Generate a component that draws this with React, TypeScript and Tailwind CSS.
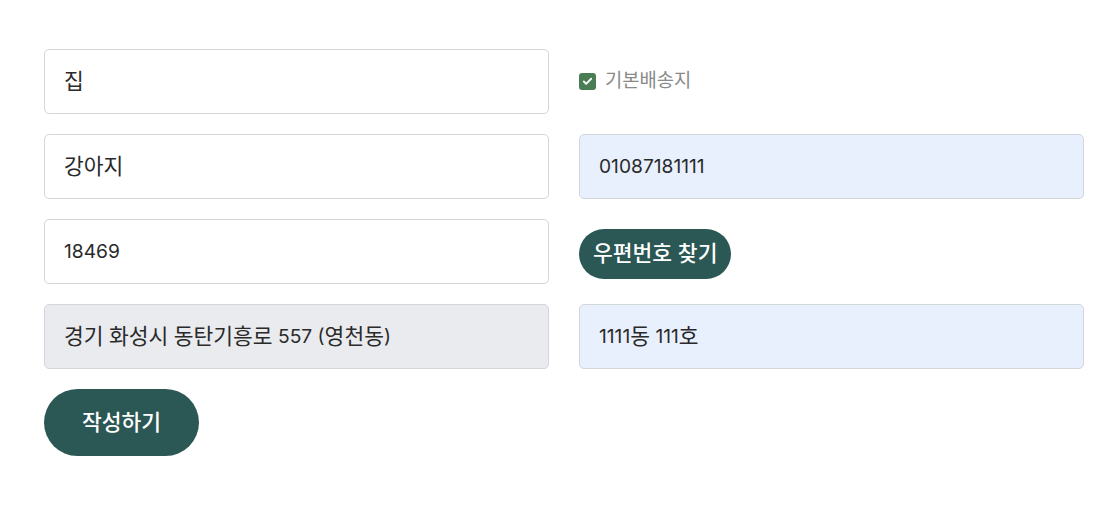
import { Check } from 'lucide-react'

const font = { fontFamily: 'Inter, "Noto Sans CJK KR", sans-serif' }

// hangul in the shot renders wider than latin, so size the runs separately
function Mixed({ text, big, small }: { text: string; big: string; small: string }) {
  const parts = text.split(/([\uAC00-\uD7A3]+)/).filter(Boolean)
  return (
    <>
      {parts.map((p, i) =>
        /[\uAC00-\uD7A3]/.test(p) ? (
          <span key={i} className={big}>{p}</span>
        ) : (
          <span key={i} className={small}>{p}</span>
        )
      )}
    </>
  )
}

function Field({ value, tone = 'white' }: { value: string; tone?: 'white' | 'fill' | 'disabled' }) {
  const bg =
    tone === 'fill' ? 'bg-[#e8f0fe]' : tone === 'disabled' ? 'bg-[#e9ebef]' : 'bg-white'
  return (
    <div
      role="textbox"
      className={`flex h-[65px] w-full items-center whitespace-pre rounded-[5px] border border-[#d3d6da] px-[19px] text-[#2a2a2a] ${bg}`}
    >
      <Mixed text={value} big="text-[21.5px]" small="text-[19.2px]" />
    </div>
  )
}

export default function App() {
  return (
    <div className="min-h-screen bg-white pt-[49px] pl-[44px]" style={font}>
      <div className="grid w-[1040px] grid-cols-2 gap-x-[30px] gap-y-[20px]">
        <Field value="집" />
        <label className="flex items-center gap-[9px]">
          <span className="flex h-[17px] w-[17px] items-center justify-center rounded-[3px] bg-[#4b7d55]">
            <Check className="h-[11px] w-[11px] text-white" strokeWidth={4} />
          </span>
          <span className="text-[18.8px] text-[#8a8a8a]">기본배송지</span>
        </label>

        <Field value="강아지" />
        <Field value="01087181111" tone="fill" />

        <Field value="18469" />
        <div className="flex items-center pt-[4px]">
          <button className="h-[50px] rounded-full bg-[#2b5754] px-[14px] text-[21.5px] font-medium text-white">
            우편번호 찾기
          </button>
        </div>

        <Field value="경기 화성시 동탄기흥로 557 (영천동)" tone="disabled" />
        <Field value="1111동 111호" tone="fill" />

        <div>
          <button className="h-[67px] w-[155px] rounded-full bg-[#2b5754] text-[21.5px] font-medium text-white">
            작성하기
          </button>
        </div>
      </div>
    </div>
  )
}
